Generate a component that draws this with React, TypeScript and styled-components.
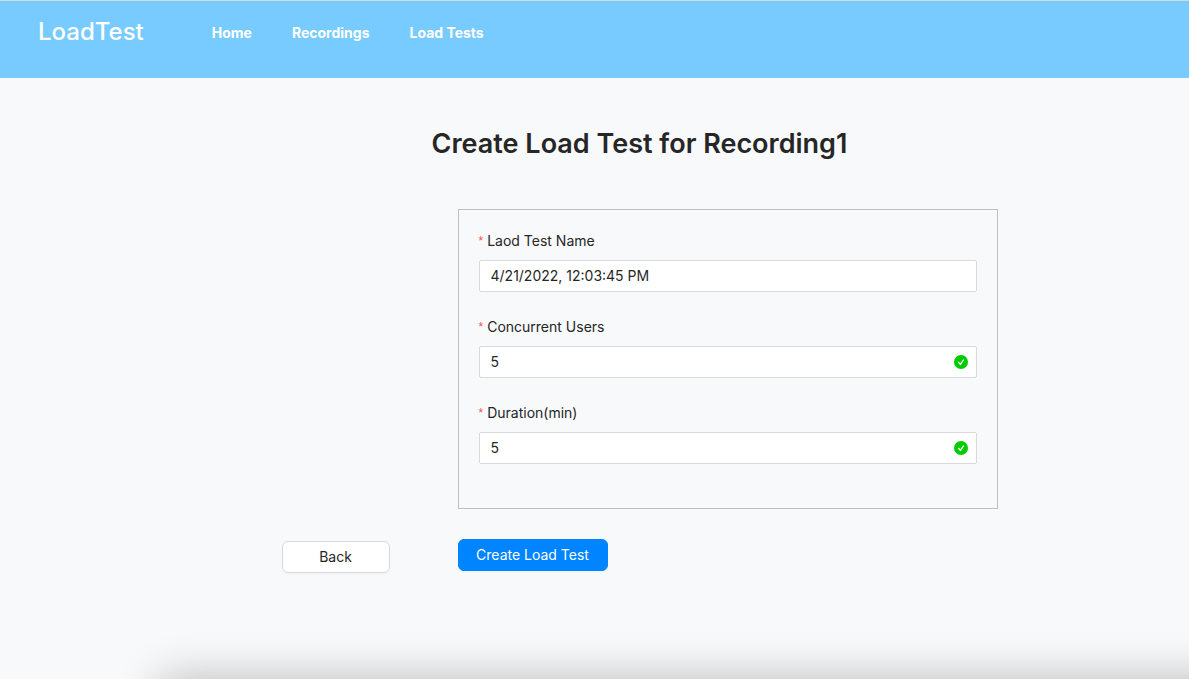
import React from "react";
import styled, { createGlobalStyle } from "styled-components";

const GlobalStyle = createGlobalStyle`
  *, *::before, *::after { box-sizing: border-box; }
  body {
    margin: 0;
    background: #f8f9fb;
    color: #262626;
    font-family: Inter, "Liberation Sans", sans-serif;
    font-size: 14px;
    line-height: 22px;
  }
  h1, p { margin: 0; }
  button, input { font: inherit; color: inherit; }
`;

const Page = styled.div`
  position: relative;
  min-height: 100vh;
  overflow: hidden;
`;

const Header = styled.header`
  display: flex;
  align-items: flex-start;
  gap: 68px;
  min-height: 78px;
  padding: 15px 38px;
  border-top: 1px solid #d5dade;
  background: #78cbff;
  color: #ffffff;
`;

const Brand = styled.a`
  color: inherit;
  font-size: 24px;
  font-weight: 500;
  line-height: 32px;
  text-decoration: none;
`;

const Nav = styled.nav`
  display: flex;
  gap: 40px;
  padding-top: 6px;
`;

const NavLink = styled.a`
  color: inherit;
  font-weight: 700;
  text-decoration: none;
`;

const Main = styled.main`
  display: flex;
  flex-direction: column;
  align-items: center;
  padding: 46px 0 80px 90px;
`;

const Title = styled.h1`
  font-size: 27px;
  font-weight: 600;
  line-height: 40px;
`;

const Form = styled.form`
  display: grid;
  grid-template-columns: 108px minmax(0, 540px);
  column-gap: 68px;
  row-gap: 30px;
  width: 100%;
  max-width: 716px;
  margin-top: 45px;
`;

const Panel = styled.div`
  grid-column: 2;
  display: flex;
  flex-direction: column;
  gap: 24px;
  padding: 20px 20px 44px;
  border: 1px solid #bfbfbf;
`;

const Field = styled.div`
  display: flex;
  flex-direction: column;
  gap: 8px;
`;

const Label = styled.label`
  display: flex;
  align-items: flex-start;
  gap: 4px;
`;

const Required = styled.span`
  color: #ff4d4f;
  font-family: "Liberation Sans", sans-serif;
  font-size: 12px;
`;

const InputBox = styled.div`
  display: flex;
  align-items: center;
  height: 32px;
  padding: 0 8px 0 11px;
  border: 1px solid #d9d9d9;
  border-radius: 2px;
  background: #ffffff;
`;

const Input = styled.input`
  flex: 1;
  min-width: 0;
  padding: 0;
  border: 0;
  outline: 0;
  background: transparent;
`;

const Button = styled.button<{ $primary?: boolean }>`
  justify-self: start;
  height: 32px;
  width: ${({ $primary }) => ($primary ? "150px" : "108px")};
  margin-top: ${({ $primary }) => ($primary ? "0" : "2px")};
  padding: 0;
  border: 1px solid ${({ $primary }) => ($primary ? "#0084ff" : "#d9d9d9")};
  border-radius: 6px;
  background: ${({ $primary }) => ($primary ? "#0084ff" : "#ffffff")};
  color: ${({ $primary }) => ($primary ? "#ffffff" : "#262626")};
  box-shadow: 0 2px 0 rgba(0, 0, 0, 0.016);
  cursor: pointer;
`;

const BottomShade = styled.div`
  position: absolute;
  top: 100%;
  left: 162px;
  right: -60px;
  height: 80px;
  box-shadow: 0 0 44px 2px rgba(0, 0, 0, 0.24);
`;

const CheckIcon = () => (
  <svg width="14" height="14" viewBox="0 0 14 14" aria-hidden="true">
    <circle cx="7" cy="7" r="7" fill="#00cc00" />
    <path d="M4.3 6.8 6.4 9.4 9.7 4.7" fill="none" stroke="#ffffff" strokeWidth="1.3" />
  </svg>
);

const fields = [
  { id: "name", label: "Laod Test Name", value: "4/21/2022, 12:03:45 PM", valid: false },
  { id: "users", label: "Concurrent Users", value: "5", valid: true },
  { id: "duration", label: "Duration(min)", value: "5", valid: true },
];

export default function App() {
  return (
    <>
      <GlobalStyle />
      <Page>
        <Header>
          <Brand href="#">LoadTest</Brand>
          <Nav>
            <NavLink href="#home">Home</NavLink>
            <NavLink href="#recordings">Recordings</NavLink>
            <NavLink href="#load-tests">Load Tests</NavLink>
          </Nav>
        </Header>
        <Main>
          <Title>Create Load Test for Recording1</Title>
          <Form onSubmit={(event) => event.preventDefault()}>
            <Panel>
              {fields.map(({ id, label, value, valid }) => (
                <Field key={id}>
                  <Label htmlFor={id}>
                    <Required>*</Required>
                    {label}
                  </Label>
                  <InputBox>
                    <Input id={id} type="text" defaultValue={value} required />
                    {valid && <CheckIcon />}
                  </InputBox>
                </Field>
              ))}
            </Panel>
            <Button type="button">Back</Button>
            <Button type="submit" $primary>
              Create Load Test
            </Button>
          </Form>
        </Main>
        <BottomShade />
      </Page>
    </>
  );
}
